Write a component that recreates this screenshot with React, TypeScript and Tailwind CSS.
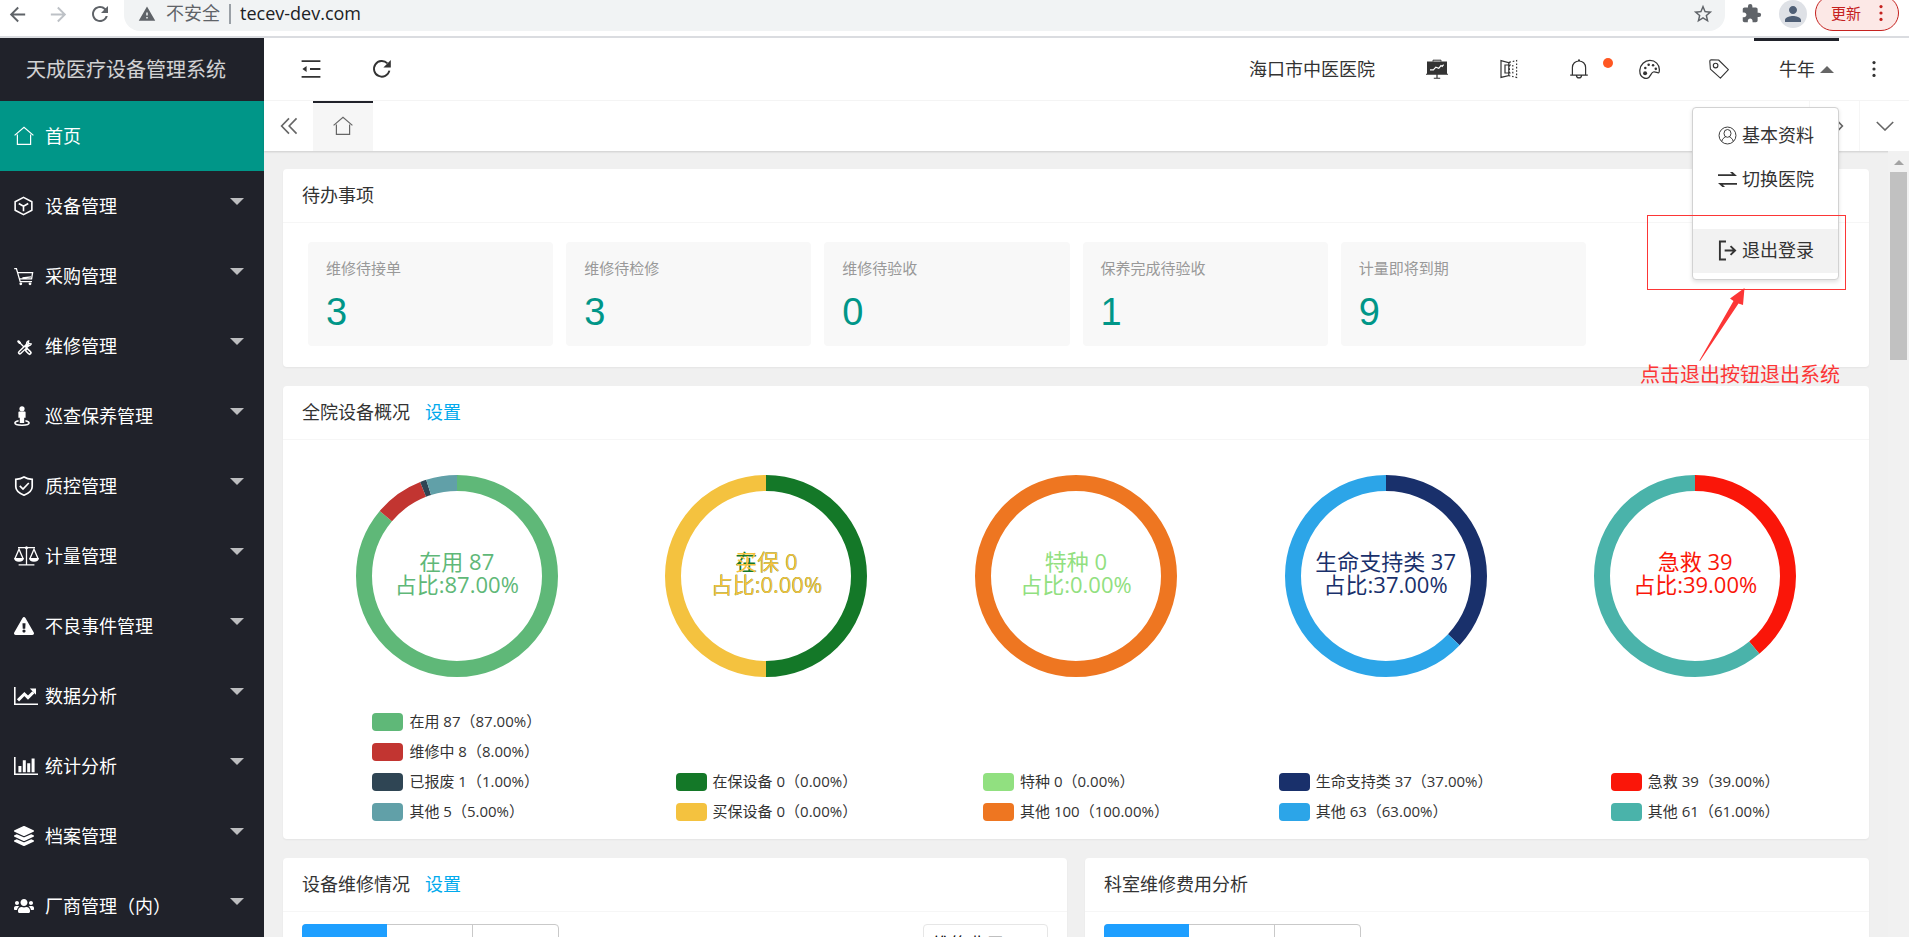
import React from 'react';
import { FaExclamationTriangle, FaLayerGroup, FaUsers } from 'react-icons/fa';
import { MdArrowBack, MdArrowForward, MdExtension, MdPerson, MdRefresh, MdStarBorder, MdWarning } from 'react-icons/md';

type IconProps = { className?: string };

const HomeIcon = ({ className }: IconProps) => (
  <svg viewBox="0 0 20 20" fill="none" stroke="currentColor" strokeWidth="1.2" className={className}>
    <path d="M.6 9.4 10 1.4l9.4 8M3.4 8.6v9.8h13.2V8.6" />
  </svg>
);

const BoxIcon = ({ className }: IconProps) => (
  <svg viewBox="0 0 20 20" fill="none" stroke="currentColor" strokeWidth="1.7" strokeLinejoin="round" className={className}>
    <path d="M10 .9 18.8 5.6v8.8L10 19.1 1.2 14.4V5.6zM5 7.4l5 2.9 5-2.9M10 10.3v5.2" />
  </svg>
);

const CartIcon = ({ className }: IconProps) => (
  <svg viewBox="0 0 20 20" fill="none" stroke="currentColor" strokeWidth="1.3" className={className}>
    <path d="M.2 2.6h2.2l3.800 13h11.800M3.800 6.600h14.800l-1 6.200H5.600M8.400 12l8.600-1.200" />
    <circle cx="6.800" cy="17.800" r="1.400" fill="currentColor" stroke="none" />
    <circle cx="16" cy="17.800" r="1.400" fill="currentColor" stroke="none" />
  </svg>
);

const ToolsIcon = ({ className }: IconProps) => (
  <svg viewBox="0 0 20 20" fill="none" stroke="currentColor" strokeLinecap="round" className={className}>
    <path d="M5 6 11 12" strokeWidth="1.400" />
    <path d="m4.400 5.400 1.400 1.400" strokeWidth="2.400" />
    <path d="m13 14.200 2.600 2.600" strokeWidth="4.400" />
    <path d="m13.200 14.400 2.200 2.200" stroke="#20222a" strokeWidth="1.300" />
    <path d="M13.200 9.400 5.800 16.600" strokeWidth="4" />
    <path d="m11 11.800-5 4.600" stroke="#20222a" strokeWidth="1.200" />
    <path d="M17.200 8a2.700 2.700 0 0 1-4.200 1.200A2.700 2.700 0 0 1 14.600 5l-.2 2.400z" strokeWidth="1.400" />
  </svg>
);

const PatrolIcon = ({ className }: IconProps) => (
  <svg viewBox="0 0 16 20" fill="currentColor" className={className}>
    <circle cx="8" cy="2.800" r="2.600" />
    <path d="M5.200 5.400h5.600q.8 0 .8.800v5.600h-1.400V17H5.800v-5.200H4.400V6.200q0-.8.8-.800z" />
    <path d="M4.600 14.800C2.400 15.200.9 16 .9 17.100c0 1.300 3.100 2.100 7.100 2.100s7.100-.8 7.100-2.100c0-1.100-1.500-1.900-3.700-2.300" fill="none" stroke="currentColor" strokeWidth="1.500" />
  </svg>
);

const ShieldIcon = ({ className }: IconProps) => (
  <svg viewBox="0 0 20 20" fill="none" stroke="currentColor" strokeWidth="1.7" className={className}>
    <path d="M10 1c2.600 1.600 5.400 2.200 8.200 2.400v7.400c0 4-3.600 6.600-8.200 8.400-4.600-1.800-8.200-4.400-8.200-8.400V3.400C4.600 3.200 7.400 2.600 10 1z" />
    <path d="m5.800 9.800 3.200 3.200 5.800-6" />
  </svg>
);

const ScaleIcon = ({ className }: IconProps) => (
  <svg viewBox="0 0 25 20" fill="none" stroke="currentColor" strokeWidth="1.300" className={className}>
    <path d="M4 1.600h17M12.500 1v17.200M4.600 18.900h15.800M1 12.400 5 3.200l4 9.200M16 12.400l4-9.200 4 9.200" />
    <circle cx="12.500" cy="1.700" r="1.500" fill="currentColor" stroke="none" />
    <path d="M0 12h10c0 2.400-2 3.700-5 3.700S0 14.400 0 12zM15 12h10c0 2.400-2 3.700-5 3.700s-5-1.300-5-3.700z" fill="currentColor" stroke="none" />
  </svg>
);

const LineChartIcon = ({ className }: IconProps) => (
  <svg viewBox="0 0 24 20" fill="currentColor" className={className}>
    <path d="M0 1h1.600v16.400H24V19H0z" />
    <path d="m4 14.400 6.400-6.400 3.600 3.600 5.400-5.400" fill="none" stroke="currentColor" strokeWidth="3" />
    <path d="M15.800 2.600h6.200v6.200z" />
  </svg>
);

const BarChartIcon = ({ className }: IconProps) => (
  <svg viewBox="0 0 24 20" fill="currentColor" className={className}>
    <path d="M0 1h1.600v16.400H24V19H0zM4.400 10h3v6.200h-3zM8.800 4.200h3v12h-3zM13.200 7.200h3v9h-3zM17.600 2.600h3v13.600h-3z" />
  </svg>
);

const IndentIcon = ({ className }: IconProps) => (
  <svg viewBox="0 0 20 20" fill="currentColor" className={className}>
    <path d="M.6 1.200h18.800v1.900H.6zM9 9.100h10.400V11H9zM.6 16.900h18.800v1.900H.6zM5.600 7v6L1.400 10z" />
  </svg>
);

const ReloadIcon = ({ className }: IconProps) => (
  <svg viewBox="0 0 20 20" className={className}>
    <path d="M17.400 11.600A7.800 7.800 0 1 1 15.400 4.400" fill="none" stroke="currentColor" strokeWidth="1.900" />
    <path d="M18.800 1v7.400h-7.400z" fill="currentColor" />
  </svg>
);

const BoardIcon = ({ className }: IconProps) => (
  <svg viewBox="0 0 22 20" className={className}>
    <path d="M1 2.600h20v12.200h1v1H0v-1h1zM10.400 15.600h1.200v3.200h2.600v1H7.800v-1h2.600z" fill="currentColor" />
    <path d="M7 2.600v-1.400h8v1.400" fill="none" stroke="currentColor" />
    <path d="M4 10.800h3.400l2.400-2.600 3 1.200 2.200-2.800 1.200.8 1.400-1.800" fill="none" stroke="#fff" strokeWidth="1.200" />
  </svg>
);

const MirrorIcon = ({ className }: IconProps) => (
  <svg viewBox="0 0 20 20" fill="none" stroke="currentColor" strokeWidth="1.200" className={className}>
    <path d="M2 1.600 9.800 3.600v13L2 18.400zM9.800 6H6v8h3.800" />
    <path d="m10.400 3.200 7.200-1.600v16.800l-7.200-1.600zM10.400 6h3.400v8h-3.400" strokeDasharray="1.600 1.800" />
  </svg>
);

const BellIcon = ({ className }: IconProps) => (
  <svg viewBox="0 0 20 20" fill="none" stroke="currentColor" strokeWidth="1.200" className={className}>
    <path d="M1.200 16.200h17.600M3.400 16V8.600C3.400 4.600 6.400 2 10 2s6.600 2.600 6.600 6.600V16M7.400 16.400c.2 3.400 5 3.400 5.200 0M9 1.200h2" />
  </svg>
);

const PaletteIcon = ({ className }: IconProps) => (
  <svg viewBox="0 0 20 20" fill="none" stroke="currentColor" strokeWidth="1.200" className={className}>
    <path d="M4.600 18C1.800 16.800.6 14 .8 10.600 1.200 5.400 5.400 1.400 10.400 1.400c5.200 0 9 3.800 9 8.600 0 1.600-.2 3.200-1 3.200-1.400 0-2.800-1.400-4.800-.8-2.400.8-2.600 5-5.400 5.800-1.200.4-2.400.4-3.600-.2z" />
    <g fill="currentColor" stroke="none">
      <circle cx="5.800" cy="13.600" r="1.900" />
      <circle cx="6" cy="8.600" r="1.200" />
      <circle cx="9.200" cy="5.400" r="1.200" />
      <circle cx="13.400" cy="6" r="1.200" />
      <circle cx="16" cy="9.400" r="1.200" />
    </g>
  </svg>
);

const TagIcon = ({ className }: IconProps) => (
  <svg viewBox="0 0 20 20" fill="none" stroke="currentColor" strokeWidth="1.100" strokeLinejoin="round" className={className}>
    <path d="M.8 2.400Q.8.8 2.400.8l7.200.2 9.800 9.600-8 8.600-10-9z" />
    <circle cx="6.600" cy="6.600" r="2.300" />
  </svg>
);

const MoreIcon = ({ className }: IconProps) => (
  <svg viewBox="0 0 4 20" fill="currentColor" className={className}>
    <circle cx="2" cy="3.600" r="1.600" />
    <circle cx="2" cy="10" r="1.600" />
    <circle cx="2" cy="16.400" r="1.600" />
  </svg>
);

const DoubleLeftIcon = ({ className }: IconProps) => (
  <svg viewBox="0 0 20 20" fill="none" stroke="currentColor" strokeWidth="1.800" className={className}>
    <path d="m10 1.600-8.200 8.400 8.200 8.400M18.400 1.600 10.200 10l8.200 8.400" />
  </svg>
);

const ProfileIcon = ({ className }: IconProps) => (
  <svg viewBox="0 0 20 20" fill="none" stroke="currentColor" strokeWidth="1" className={className}>
    <circle cx="10" cy="10" r="8.900" />
    <ellipse cx="10" cy="7.800" rx="3.700" ry="4.100" />
    <path d="M4 16.200c.4-2.600 2-3.600 4-4.800M16 16.200c-.4-2.600-2-3.600-4-4.800" />
  </svg>
);

const SwapIcon = ({ className }: IconProps) => (
  <svg viewBox="0 0 20 20" fill="currentColor" className={className}>
    <path d="M0 4.600h15l-2.400-2.400h2.800L20 6.200H0zM20 15.400H5l2.400 2.400H4.600L0 13.800h20z" />
  </svg>
);

const LogoutIcon = ({ className }: IconProps) => (
  <svg viewBox="0 0 20 22" fill="none" stroke="currentColor" strokeWidth="2" className={className}>
    <path d="M8.400 1.600H2v18.800h6.400M7 11h11M13.200 6.400l4.800 4.600-4.800 4.600" />
  </svg>
);

const menus = [
  { title: '首页', icon: HomeIcon, size: 'w-5 h-5', active: true },
  { title: '设备管理', icon: BoxIcon, size: 'w-[19px] h-5' },
  { title: '采购管理', icon: CartIcon, size: 'w-5 h-5' },
  { title: '维修管理', icon: ToolsIcon, size: 'w-5 h-5' },
  { title: '巡查保养管理', icon: PatrolIcon, size: 'w-4 h-5' },
  { title: '质控管理', icon: ShieldIcon, size: 'w-5 h-5' },
  { title: '计量管理', icon: ScaleIcon, size: 'w-[25px] h-5' },
  { title: '不良事件管理', icon: FaExclamationTriangle, size: 'w-5 h-5' },
  { title: '数据分析', icon: LineChartIcon, size: 'w-6 h-5' },
  { title: '统计分析', icon: BarChartIcon, size: 'w-6 h-5' },
  { title: '档案管理', icon: FaLayerGroup, size: 'w-5 h-5' },
  { title: '厂商管理（内）', icon: FaUsers, size: 'w-5 h-5' }
];

const todos = [
  { label: '维修待接单', value: 3 },
  { label: '维修待检修', value: 3 },
  { label: '维修待验收', value: 0 },
  { label: '保养完成待验收', value: 1 },
  { label: '计量即将到期', value: 9 }
];

const charts = [
  {
    labels: [{ name: '在用 87', ratio: '占比:87.00%', color: '#5fb878' }],
    parts: [
      { text: '在用 87（87.00%）', share: 87, color: '#5fb878' },
      { text: '维修中 8（8.00%）', share: 8, color: '#c23531' },
      { text: '已报废 1（1.00%）', share: 1, color: '#2f4554' },
      { text: '其他 5（5.00%）', share: 5, color: '#61a0a8' }
    ]
  },
  {
    labels: [
      { name: '在保 0', ratio: '占比:0.00%', color: '#147828' },
      { name: '买保 0', ratio: '占比:0.00%', color: '#f4c23f' }
    ],
    parts: [
      { text: '在保设备 0（0.00%）', share: 1, color: '#147828' },
      { text: '买保设备 0（0.00%）', share: 1, color: '#f4c23f' }
    ]
  },
  {
    labels: [{ name: '特种 0', ratio: '占比:0.00%', color: '#91e080' }],
    parts: [
      { text: '特种 0（0.00%）', share: 0, color: '#91e080' },
      { text: '其他 100（100.00%）', share: 100, color: '#ee7621' }
    ]
  },
  {
    labels: [{ name: '生命支持类 37', ratio: '占比:37.00%', color: '#19306b' }],
    parts: [
      { text: '生命支持类 37（37.00%）', share: 37, color: '#19306b' },
      { text: '其他 63（63.00%）', share: 63, color: '#2ca5e8' }
    ]
  },
  {
    labels: [{ name: '急救 39', ratio: '占比:39.00%', color: '#fa1609' }],
    parts: [
      { text: '急救 39（39.00%）', share: 39, color: '#fa1609' },
      { text: '其他 61（61.00%）', share: 61, color: '#4ab3aa' }
    ]
  }
];

type Chart = (typeof charts)[number];

const Donut = ({ chart }: { chart: Chart }) => {
  const total = chart.parts.reduce((sum, part) => sum + part.share, 0);
  let start = 0;

  return (
    <div className="relative">
      <svg viewBox="0 0 202 202" className="w-[202px] h-[202px] -rotate-90">
        {chart.parts.map((part, index) => {
          const length = (part.share / total) * 100;
          const offset = start;
          start += length;
          if (!length) return null;
          return (
            <circle
              key={index}
              cx="101"
              cy="101"
              r="93"
              fill="none"
              stroke={part.color}
              strokeWidth="16"
              pathLength={100}
              strokeDasharray={`${length} ${100 - length}`}
              strokeDashoffset={-offset}
            />
          );
        })}
      </svg>
      {chart.labels.map((label, index) => (
        <div
          key={index}
          className="absolute inset-0 pb-[6px] flex flex-col items-center justify-center text-[22px] leading-[23px] whitespace-nowrap"
          style={{ color: label.color }}
        >
          <span>{label.name}</span>
          <span>{label.ratio}</span>
        </div>
      ))}
    </div>
  );
};

const Card = ({ title, setting, className = '', children }: {
  title: string;
  setting?: boolean;
  className?: string;
  children: React.ReactNode;
}) => (
  <section className={`bg-white rounded-sm shadow-[0_1px_2px_rgba(0,0,0,0.05)] ${className}`}>
    <div className="h-[54px] px-[19px] pb-[2px] border-b border-[#f6f6f6] flex items-center gap-[15px] text-[18px] leading-[26px] text-[#333]">
      <h2>{title}</h2>
      {setting && <a href="#setting" className="text-[#01aaed]">设置</a>}
    </div>
    {children}
  </section>
);

const PeriodTabs = () => (
  <div className="flex h-[50px] border border-[#c9c9c9] rounded-sm">
    <button aria-label="月" className="w-[85px] -m-px bg-[#1e9fff] rounded-l-sm" />
    <button aria-label="季" className="w-[86px]" />
    <button aria-label="年" className="w-[86px] border-l border-[#c9c9c9]" />
  </div>
);

const App = () => {
  return (
    <div className="relative h-screen overflow-hidden flex flex-col bg-[#f0f0f0] text-[#333] font-['Open_Sans','Noto_Sans_CJK_SC',sans-serif]">
      {/* Browser toolbar */}
      <div className="h-[38px] shrink-0 bg-white border-b-2 border-[#dadce0] flex items-start text-[#5f6368]">
        <div className="flex gap-[18px] pl-[6px] pt-[2px] shrink-0">
          <button aria-label="后退"><MdArrowBack className="w-[23px] h-[23px]" /></button>
          <button aria-label="前进"><MdArrowForward className="w-[23px] h-[23px] text-[#bdc1c6]" /></button>
          <button aria-label="刷新"><MdRefresh className="w-[24px] h-[24px]" /></button>
        </div>
        <div className="ml-[12px] flex-1 h-[31px] pb-1 bg-[#f1f3f4] rounded-b-[16px] flex items-center pl-[14px] pr-[11px] text-[18px]">
          <MdWarning className="w-[18px] h-[18px]" />
          <span className="ml-[10px]">不安全</span>
          <span className="mx-[9px] w-[2px] h-5 bg-[#9aa0a6]" />
          <span className="text-[#202124]">tecev-dev.com</span>
          <MdStarBorder className="ml-auto w-[22px] h-[22px]" />
        </div>
        <MdExtension className="ml-[16px] mt-[3px] w-[21px] h-[21px]" />
        <div className="ml-[17px] w-[28px] h-[28px] rounded-full bg-[#dee1e6] flex items-center justify-center text-[#4f5f76]">
          <MdPerson className="w-6 h-6" />
        </div>
        <button className="ml-[8px] mr-[10px] w-[84px] h-[36px] -mt-[5px] rounded-full border border-[#c5221f] bg-[#fce8e6] text-[#c5221f] flex items-center justify-between pl-[15px] pr-[15px] text-[15px]">
          更新
          <MoreIcon className="w-1 h-[20px]" />
        </button>
      </div>

      <div className="flex flex-1 min-h-0">
        <aside className="w-[264px] shrink-0 bg-[#20222a] text-white overflow-hidden">
          <div className="h-[63px] pr-[12px] flex items-center justify-center text-[20px] text-white/80">天成医疗设备管理系统</div>
          <nav>
            {menus.map((menu, index) => {
              const Icon = menu.icon;
              return (
                <a
                  key={index}
                  href="#menu"
                  className={`h-[70px] pl-[14px] pr-[20px] flex items-center text-[18px] ${menu.active ? 'bg-[#009688]' : ''}`}
                >
                  <span className="w-[31px] shrink-0 flex">
                    <Icon className={`${menu.size} shrink-0`} />
                  </span>
                  <span>{menu.title}</span>
                  {!menu.active && (
                    <span className="ml-auto mb-[9px] border-x-[7px] border-t-[7px] border-x-transparent border-t-white/70" />
                  )}
                </a>
              );
            })}
          </nav>
        </aside>

        <div className="flex-1 min-w-0 flex flex-col">
          <header className="h-[63px] shrink-0 bg-white border-b border-[#f6f6f6] flex items-center text-[18px]">
            <button aria-label="收起菜单" className="w-[71px] pl-[12px] flex justify-center ml-[5px]"><IndentIcon className="w-5 h-5" /></button>
            <button aria-label="刷新页面" className="w-[71px] pl-[12px] flex justify-center"><ReloadIcon className="w-5 h-5" /></button>
            <div className="ml-auto px-[24px]">海口市中医医院</div>
            <button aria-label="看板" className="w-[75px] flex justify-center"><BoardIcon className="w-[22px] h-5" /></button>
            <button aria-label="对比" className="w-[70px] flex justify-center"><MirrorIcon className="w-5 h-5" /></button>
            <button aria-label="消息" className="relative w-[70px] flex justify-center">
              <BellIcon className="w-5 h-5" />
              <span className="absolute right-[1px] -top-px w-[10px] h-[10px] rounded-full bg-[#ff5722]" />
            </button>
            <button aria-label="主题" className="w-[70px] flex justify-center"><PaletteIcon className="w-[21px] h-[21px]" /></button>
            <button aria-label="便签" className="w-[70px] flex justify-center"><TagIcon className="w-5 h-5" /></button>
            <div className="relative h-full w-[85px] border-t-[3px] border-[#20222a]">
              <button className="h-full w-full pl-[25px] pb-[3px] flex items-center gap-[5px]">
                <span>牛年</span>
                <span className="border-x-[7px] border-b-[7px] border-x-transparent border-b-[#666]" />
              </button>
              <div className="absolute z-10 right-0 top-[66px] w-[147px] py-[6px] bg-white border border-[#d2d2d2] rounded-sm shadow-[0_2px_4px_rgba(0,0,0,0.12)]">
                <a href="#profile" className="h-[44px] pl-[25px] pb-[2px] flex items-center gap-[5px] whitespace-nowrap"><ProfileIcon className="w-[19px] h-[19px]" />基本资料</a>
                <a href="#switch" className="h-[44px] pl-[25px] pb-[2px] flex items-center gap-[5px] whitespace-nowrap"><SwapIcon className="w-[19px] h-[19px]" />切换医院</a>
                <a href="#logout" className="mt-[27px] h-[44px] pl-[25px] pb-[2px] bg-[#f2f2f2] flex items-center gap-[5px] whitespace-nowrap"><LogoutIcon className="w-[19px] h-[21px]" />退出登录</a>
              </div>
            </div>
            <button aria-label="更多" className="w-[70px] flex justify-center"><MoreIcon className="w-1 h-5" /></button>
          </header>

          <div className="h-[50px] shrink-0 bg-white shadow-[0_1px_2px_rgba(0,0,0,0.15)] flex items-center text-[#666]">
            <button aria-label="向左" className="w-[49px] h-full flex items-center justify-center"><DoubleLeftIcon className="w-[18px] h-[18px]" /></button>
            <a href="#home" aria-label="首页" className="w-[60px] h-full pb-[2px] border-t-2 border-[#20222a] bg-[#f6f6f6] flex items-center justify-center">
              <HomeIcon className="w-5 h-5" />
            </a>
            <button aria-label="向右" className="ml-auto w-[50px] h-full border-l border-[#f6f6f6] flex items-center justify-center">
              <DoubleLeftIcon className="w-[18px] h-[18px] rotate-180" />
            </button>
            <button aria-label="展开" className="w-[50px] h-full border-l border-[#f6f6f6] flex items-center justify-center">
              <svg viewBox="0 0 18 10" fill="none" stroke="currentColor" strokeWidth="1.6" className="w-[18px] h-[10px]">
                <path d="m.8 1 8.200 8 8.200-8" />
              </svg>
            </button>
          </div>

          <div className="flex flex-1 min-h-0">
            <main className="flex-1 min-w-0 overflow-hidden px-[19px] pt-[18px]">
              <Card title="待办事项" className="mb-[19px]">
                <div className="grid grid-cols-6 gap-[13px] px-[25px] pt-[19px] pb-[21px]">
                  {todos.map((todo, index) => (
                    <a key={index} href="#todo" className="h-[104px] pt-[14px] px-[18px] rounded-sm bg-[#f8f8f8]">
                      <h3 className="text-[15px] leading-[24px] text-[#999]">{todo.label}</h3>
                      <p className="mt-[13px] text-[38px] leading-[38px] text-[#009688] font-['Liberation_Sans',sans-serif]">{todo.value}</p>
                    </a>
                  ))}
                </div>
              </Card>

              <Card title="全院设备概况" setting className="mb-[19px]">
                <div className="grid grid-cols-5 px-[19px] pt-[35px] pb-[18px]">
                  {charts.map((chart, index) => (
                    <div key={index} className="flex flex-col items-center justify-between gap-9">
                      <Donut chart={chart} />
                      <ul className="space-y-3">
                        {chart.parts.map((part, idx) => (
                          <li key={idx} className="h-[18px] flex items-center gap-[6px] text-[15px] leading-[18px] whitespace-nowrap">
                            <span className="w-[31px] h-[18px] rounded-[4px]" style={{ backgroundColor: part.color }} />
                            <span className="pb-[2px]">{part.text}</span>
                          </li>
                        ))}
                      </ul>
                    </div>
                  ))}
                </div>
              </Card>

              <div className="grid grid-cols-2 gap-[18px]">
                <Card title="设备维修情况" setting>
                  <div className="px-[19px] pt-3 pb-5 flex items-start justify-between">
                    <PeriodTabs />
                    <select aria-label="统计项" className="w-[125px] h-[40px] pl-[8px] border border-[#e6e6e6] rounded-sm bg-white text-[18px] text-black appearance-none">
                      <option>维修费用</option>
                    </select>
                  </div>
                </Card>
                <Card title="科室维修费用分析">
                  <div className="px-[19px] pt-3 pb-5 flex items-start">
                    <PeriodTabs />
                  </div>
                </Card>
              </div>
            </main>

            <div className="w-[21px] shrink-0 bg-[#f1f1f1] flex flex-col items-center pt-[9px]">
              <span className="border-x-[5px] border-b-[5px] border-x-transparent border-b-[#a3a3a3]" />
              <span className="mt-[7px] w-[17px] h-[188px] bg-[#c1c1c1]" />
            </div>
          </div>
        </div>
      </div>

      {/* Hint for the logout entry */}
      <div className="absolute z-20 top-[215px] right-[63px] w-[206px] flex flex-col pointer-events-none text-[#fc3636]">
        <div className="ml-auto w-[199px] h-[75px] border border-[#fc3636]" />
        <svg viewBox="0 0 46 74" fill="currentColor" className="ml-[59px] -mt-[2px] w-[46px] h-[74px]">
          <path d="M45.500 0 44 17l-4.500-1.500L1 73l-.6-.6L34.500 13 31 10.500z" />
        </svg>
        <p className="text-[20px] leading-[26px] whitespace-nowrap">点击退出按钮退出系统</p>
      </div>
    </div>
  );
};

export default App;
